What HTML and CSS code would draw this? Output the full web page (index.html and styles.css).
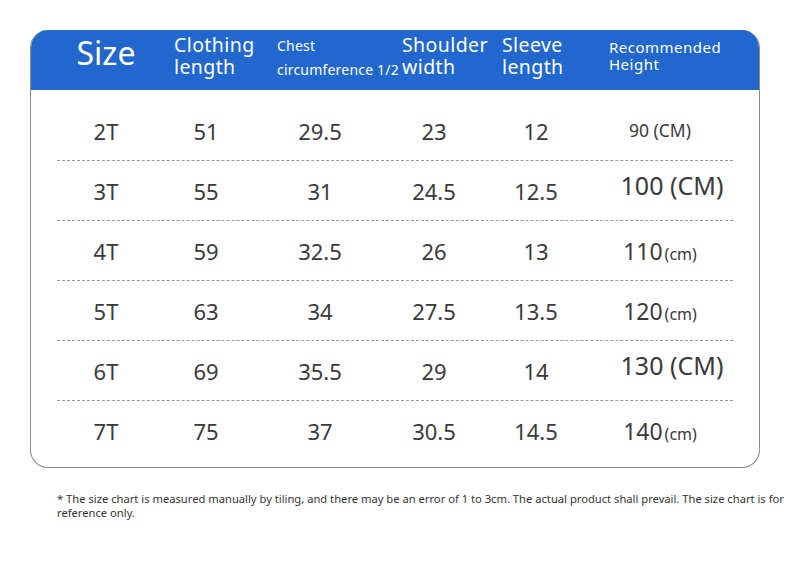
FILE: index.html
```html
<!DOCTYPE html>
<html>
<head>
<meta charset="utf-8">
<link rel="stylesheet" href="styles.css">
</head>
<body>
<div class="page">
  <div class="card">
    <div class="head">
      <div class="h h-size">Size</div>
      <div class="h h-mid">Clothing<br>length</div>
      <div class="h h-chest"><span class="c1">Chest</span><span class="c2">circumference 1/2</span></div>
      <div class="h h-mid">Shoulder<br>width</div>
      <div class="h h-mid h-sleeve">Sleeve<br>length</div>
      <div class="h h-rec">Recommended<br>Height</div>
    </div>
    <div class="body">
      <div class="row"><span>2T</span><span>51</span><span>29.5</span><span>23</span><span>12</span><span class="ht ht-sm">90 (CM)</span></div>
      <div class="row"><span>3T</span><span>55</span><span>31</span><span>24.5</span><span>12.5</span><span class="ht ht-lg">100 (CM)</span></div>
      <div class="row"><span>4T</span><span>59</span><span>32.5</span><span>26</span><span>13</span><span class="ht">110<small>(cm)</small></span></div>
      <div class="row"><span>5T</span><span>63</span><span>34</span><span>27.5</span><span>13.5</span><span class="ht">120<small>(cm)</small></span></div>
      <div class="row"><span>6T</span><span>69</span><span>35.5</span><span>29</span><span>14</span><span class="ht ht-lg">130 (CM)</span></div>
      <div class="row last"><span>7T</span><span>75</span><span>37</span><span>30.5</span><span>14.5</span><span class="ht">140<small>(cm)</small></span></div>
    </div>
  </div>
  <p class="note">* The size chart is measured manually by tiling, and there may be an error of 1 to 3cm. The actual product shall prevail. The size chart is for reference only.</p>
</div>
</body>
</html>
```

FILE: styles.css
```css
html, body {
  margin: 0;
  padding: 0;
  background: #fff;
}
body {
  font-family: "Noto Sans", "Open Sans", sans-serif;
  color: #333;
}
.page {
  padding: 30px 0 0 30px;
  width: 760px;
}
.card {
  width: 728px;
  border: 1px solid #8a8a8a;
  border-top: none;
  border-radius: 18px;
  overflow: hidden;
}
.head {
  display: grid;
  grid-template-columns: 98px 102px 126px 102px 102px 1fr;
  height: 60px;
  background: #2167cd;
  color: #fff;
  padding-left: 27px;
  margin: 0 -1px;
}
.h {
  display: flex;
  flex-direction: column;
  justify-content: center;
  padding-left: 19px;
  font-weight: 400;
}
.h-size {
  font-size: 32px;
  padding-left: 0;
  align-items: center;
  line-height: 1;
  padding-bottom: 15px;
}
.h-mid {
  font-size: 19.5px;
  line-height: 22px;
  padding-bottom: 9px;
  letter-spacing: 0.4px;
  white-space: nowrap;
}
.h-sleeve {
  padding-left: 17px;
}
.h-chest {
  padding-left: 20px;
  font-size: 14px;
  justify-content: flex-start;
  padding-top: 7px;
  letter-spacing: 0.2px;
}
.h-chest .c1 { line-height: 18px; }
.h-chest .c2 { line-height: 18px; margin-top: 6px; white-space: nowrap; }
.h-rec {
  font-size: 15px;
  line-height: 17px;
  padding-left: 22px;
  padding-bottom: 8px;
  letter-spacing: 0.5px;
}
.body {
  padding: 11px 26px 6px 26px;
}
.row {
  display: grid;
  grid-template-columns: 98px 102px 126px 102px 102px 1fr;
  height: 59px;
  align-items: center;
  border-bottom: 1px dashed #9a9a9a;
  font-size: 22px;
  color: #3a3a3a;
}
.row.last {
  border-bottom: none;
  height: 60px;
}
.row span {
  text-align: center;
}
.ht {
  font-size: 23px;
  padding-right: 0;
}
.ht small {
  font-size: 16px;
  margin-left: 2px;
}
.ht-sm {
  font-size: 17.5px;
  padding-bottom: 2px;
  padding-right: 0;
}
.ht-lg {
  font-size: 25px;
  padding-bottom: 12px;
  padding-left: 24px;
}
.note {
  margin: 24px 0 0 27px;
  width: 733px;
  font-size: 11.2px;
  line-height: 14px;
  color: #333;
}
```
